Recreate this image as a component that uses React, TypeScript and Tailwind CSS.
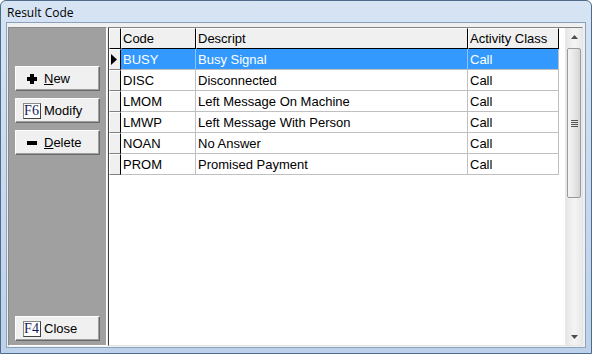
import React from 'react';

const rows = [
  { code: 'BUSY', descript: 'Busy Signal', cls: 'Call' },
  { code: 'DISC', descript: 'Disconnected', cls: 'Call' },
  { code: 'LMOM', descript: 'Left Message On Machine', cls: 'Call' },
  { code: 'LMWP', descript: 'Left Message With Person', cls: 'Call' },
  { code: 'NOAN', descript: 'No Answer', cls: 'Call' },
  { code: 'PROM', descript: 'Promised Payment', cls: 'Call' },
];

function KeyBox({ label }: { label: string }) {
  return (
    <span className="flex h-[16px] w-[18px] items-center justify-center border border-[#8a8a8a] border-r-[#404040] border-b-[#404040] bg-white font-['Liberation_Serif',serif] text-[14px] leading-none text-[#1a1a5a]">
      {label}
    </span>
  );
}

function PanelButton({ icon, children }: { icon: React.ReactNode; children: React.ReactNode }) {
  return (
    <button className="flex h-[25px] w-[85px] items-center border border-t-white border-l-white border-r-[#696969] border-b-[#696969] bg-[#f0f0f0] shadow-[inset_-1px_-1px_0_#a0a0a0] text-[13px] text-black">
      <span className="flex w-[28px] justify-center pl-[3px]">{icon}</span>
      <span>{children}</span>
    </button>
  );
}

function Plus() {
  return (
    <svg width="10" height="10" viewBox="0 0 10 10">
      <rect x="3" y="0" width="4" height="10" fill="#000" />
      <rect x="0" y="3" width="10" height="4" fill="#000" />
    </svg>
  );
}

function Minus() {
  return (
    <svg width="10" height="10" viewBox="0 0 10 10">
      <rect x="0" y="3" width="10" height="4" fill="#000" />
    </svg>
  );
}

function ScrollBar() {
  return (
    <div className="flex w-[17px] flex-col items-center border-l border-[#e8e8e8] bg-gradient-to-r from-[#e6e6e6] via-[#f4f4f4] to-[#e9e9e9]">
      <div className="flex h-[17px] w-full items-center justify-center">
        <svg width="7" height="4" viewBox="0 0 7 4">
          <path d="M3.5 0 L7 4 L0 4 Z" fill="#4d4d4d" />
        </svg>
      </div>
      <div className="mt-[3px] flex h-[150px] w-[14px] items-center justify-center rounded-[2px] border border-[#9a9a9a] bg-gradient-to-r from-[#f4f4f4] via-[#e8e8e8] to-[#d4d4d4]">
        <div className="flex flex-col gap-[1px]">
          <div className="h-[1px] w-[7px] bg-[#555]" />
          <div className="h-[1px] w-[7px] bg-[#555]" />
          <div className="h-[1px] w-[7px] bg-[#555]" />
          <div className="h-[1px] w-[7px] bg-[#555]" />
        </div>
      </div>
      <div className="flex-1" />
      <div className="flex h-[17px] w-full items-center justify-center">
        <svg width="7" height="4" viewBox="0 0 7 4">
          <path d="M0 0 L7 0 L3.5 4 Z" fill="#4d4d4d" />
        </svg>
      </div>
    </div>
  );
}

export default function App() {
  return (
    <div className="flex h-[354px] w-[592px] flex-col overflow-hidden rounded-t-[6px] border border-[#4f6b8a] bg-gradient-to-b from-[#d6e4f4] to-[#bcd1ea] font-['Liberation_Sans',Arial,sans-serif]">
      {/* Title bar */}
      <div className="flex h-[21px] items-center pl-[6px] pt-[2px] font-['Open_Sans',sans-serif] text-[12px] text-black">
        Result Code
      </div>

      {/* Client area */}
      <div className="mx-[5px] mb-[5px] flex flex-1 border border-[#8aa2bd] bg-[#f0f0f0] pt-[4px] pb-[1px] pl-[1px] pr-[2px]">
        {/* Left panel */}
        <div className="flex w-[99px] flex-col border border-t-[#8a8a8a] border-l-[#8a8a8a] border-r-white border-b-white bg-[#a0a0a0] pl-[6px] pt-[38px] pb-[4px]">
          <div className="flex flex-col gap-[7px]">
            <PanelButton icon={<Plus />}>
              <span className="underline">N</span>ew
            </PanelButton>
            <PanelButton icon={<KeyBox label="F6" />}>Modify</PanelButton>
            <PanelButton icon={<Minus />}>
              <span className="underline">D</span>elete
            </PanelButton>
          </div>
          <div className="flex-1" />
          <PanelButton icon={<KeyBox label="F4" />}>Close</PanelButton>
        </div>

        {/* Grid */}
        <div className="ml-[1px] flex flex-1 border border-t-[#828282] border-l-[#404040] border-r-[#e3e3e3] border-b-[#e3e3e3] bg-white">
          <div className="flex flex-1 flex-col text-[13px] leading-none">
            {/* Header */}
            <div className="flex h-[21px]">
              <div className="w-[12px] border border-t-white border-l-white border-r-black border-b-black bg-[#f0f0f0]" />
              <div className="flex w-[75px] items-center border border-t-white border-l-white border-r-black border-b-black bg-[#f0f0f0] pl-[1px]">
                Code
              </div>
              <div className="flex w-[272px] items-center border border-t-white border-l-white border-r-black border-b-black bg-[#f0f0f0] pl-[1px]">
                Descript
              </div>
              <div className="flex w-[91px] items-center border border-t-white border-l-white border-r-black border-b-black bg-[#f0f0f0] pl-[1px]">
                Activity Class
              </div>
            </div>
            {/* Rows */}
            {rows.map((r, i) => {
              const sel = i === 0;
              return (
                <div key={r.code} className="flex h-[21px]">
                  <div className="flex w-[12px] items-center border border-t-white border-l-white border-r-black border-b-[#808080] bg-[#f0f0f0]">
                    {sel && (
                      <svg width="6" height="11" viewBox="0 0 6 11" className="ml-[1px]">
                        <path d="M0 0 L6 5.5 L0 11 Z" fill="#000" />
                      </svg>
                    )}
                  </div>
                  <div
                    className={`flex w-[75px] items-center border-r border-b border-[#c0c0c0] pl-[2px] ${sel ? 'bg-[#3399ff] text-white border-r-[#8ec4ff]' : 'text-black'}`}
                  >
                    {r.code}
                  </div>
                  <div
                    className={`flex w-[272px] items-center border-r border-b border-[#c0c0c0] pl-[2px] ${sel ? 'bg-[#3399ff] text-white border-r-[#8ec4ff]' : 'text-black'}`}
                  >
                    {r.descript}
                  </div>
                  <div
                    className={`flex w-[91px] items-center border-r border-b border-[#c0c0c0] pl-[2px] ${sel ? 'bg-[#3399ff] text-white' : 'text-black'}`}
                  >
                    {r.cls}
                  </div>
                </div>
              );
            })}
          </div>
          <ScrollBar />
        </div>
      </div>
    </div>
  );
}
